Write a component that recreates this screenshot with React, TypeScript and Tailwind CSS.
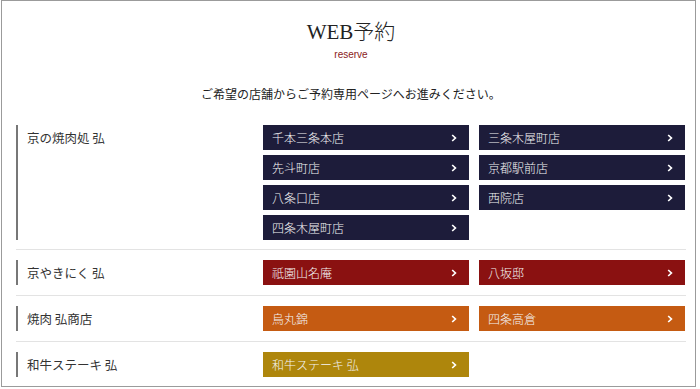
import React from "react";

type Section = { name: string; bg: string; shops: string[] };

const sections: Section[] = [
  {
    name: "京の焼肉処 弘",
    bg: "bg-[#1d1c3a]",
    shops: ["千本三条本店", "三条木屋町店", "先斗町店", "京都駅前店", "八条口店", "西院店", "四条木屋町店"],
  },
  { name: "京やきにく 弘", bg: "bg-[#8a1111]", shops: ["祇園山名庵", "八坂邸"] },
  { name: "焼肉 弘商店", bg: "bg-[#c55b12]", shops: ["烏丸錦", "四条高倉"] },
  { name: "和牛ステーキ 弘", bg: "bg-[#ae860c]", shops: ["和牛ステーキ 弘"] },
];

function Chevron() {
  return (
    <svg width="6" height="8" viewBox="0 0 6 8" className="shrink-0">
      <polyline points="1.2,1 4.4,4 1.2,7" fill="none" stroke="#ffffff" strokeWidth="1.7" />
    </svg>
  );
}

export default function App() {
  return (
    <div
      className="w-[700px] h-[389px] bg-white overflow-hidden"
      style={{ fontFamily: '"Noto Sans CJK JP", "Noto Sans", sans-serif' }}
    >
      <div className="ml-[1px] w-[695px] h-[387px] border border-[#9b9b9b] overflow-hidden pl-[14px] pr-[9px]">
        <div className="flex flex-col items-center">
          <div
            className="mt-[21px] text-[21px] leading-[21px] font-light text-[#222]"
            style={{ fontFamily: '"Liberation Serif", "Noto Sans CJK JP", serif' }}
          >
            WEB予約
          </div>
          <div
            className="mt-[7px] text-[10px] leading-[10px] text-[#8b1a1a]"
            style={{ fontFamily: '"Liberation Sans", sans-serif' }}
          >
            reserve
          </div>
          <div className="mt-[28px] text-[12px] leading-[12px] text-[#222]">
            ご希望の店舗からご予約専用ページへお進みください。
          </div>
        </div>

        <div className="mt-[25px] flex flex-col">
          {sections.map((s, i) => (
            <div
              key={s.name}
              className={i === 0 ? "pb-[9px] border-b border-[#e3e3e3]" : "py-[10px] border-b border-[#e3e3e3]"}
            >
              <div className="flex">
                <div className="w-[247px] border-l-2 border-[#777777] pl-[9px] text-[12.5px] leading-[25px] text-[#333]">
                  {s.name}
                </div>
                <div className="grid grid-cols-[206px_206px] gap-x-[10px] gap-y-[5px]">
                  {s.shops.map((shop) => (
                    <div
                      key={shop}
                      className={`${s.bg} flex h-[25px] items-center justify-between pl-[9px] pr-[12px] text-[12px] font-light text-[#f4f4f4]`}
                    >
                      <span>{shop}</span>
                      <Chevron />
                    </div>
                  ))}
                </div>
              </div>
            </div>
          ))}
        </div>
      </div>
    </div>
  );
}
